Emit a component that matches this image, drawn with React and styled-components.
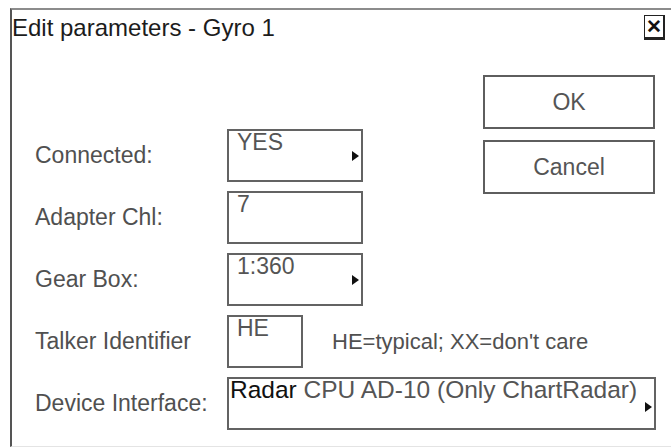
import React from 'react';
import styled, { createGlobalStyle } from 'styled-components';

const GlobalStyle = createGlobalStyle`
  body {
    margin: 0;
    background: #fff;
    font-family: "Liberation Sans", Arial, sans-serif;
    overflow: hidden;
  }
`;

const Dialog = styled.div`
  box-sizing: border-box;
  margin: 8px 0 0 10px;
  width: 661px;
  height: 439px;
  border-top: 2px solid #8c8c8c;
  border-left: 2px solid #555;
  border-bottom: 1px solid #e4e4e4;
  display: flex;
  flex-direction: column;
`;

const TitleBar = styled.div`
  height: 38px;
  display: flex;
  justify-content: space-between;
  align-items: flex-start;
`;

const Title = styled.div`
  padding-top: 4px;
  font-size: 24px;
  line-height: 28px;
  color: #1c1c1c;
`;

const CloseBox = styled.div`
  box-sizing: border-box;
  margin: 5px 6px 0 0;
  width: 21px;
  height: 25px;
  border: 1px solid #222;
  border-right-width: 2px;
  border-bottom-width: 3px;
  display: flex;
  align-items: center;
  justify-content: center;
  font-size: 19px;
  font-weight: bold;
  color: #111;
`;

const Body = styled.div`
  padding: 27px 16px 0 23px;
  display: flex;
  flex-direction: column;
  gap: 9px;
`;

const TopArea = styled.div`
  display: flex;
  align-items: flex-start;
`;

/* fixed width: the hint on the talker row runs on past it */
const Form = styled.div`
  margin-top: 54px;
  width: 328px;
  flex-shrink: 0;
  display: flex;
  flex-direction: column;
  gap: 9px;
`;

const Row = styled.div`
  display: flex;
  align-items: center;
  white-space: nowrap;
`;

const Label = styled.div`
  width: 192px;
  flex-shrink: 0;
  font-size: 23px;
  color: #505050;
`;

const Field = styled.div`
  box-sizing: border-box;
  flex-shrink: 0;
  width: ${p => p.$w}px;
  height: 53px;
  border: 2px solid #636363;
  padding: 0 2px 0 ${p => p.$pad ?? 8}px;
  display: flex;
  justify-content: space-between;
  font-size: ${p => p.$size ?? 23}px;
  line-height: 22px;
  color: #555;
`;

const Value = styled.span`
  align-self: flex-start;
`;

const Strong = styled.span`
  color: #111;
`;

const Arrow = styled.span`
  align-self: center;
  flex-shrink: 0;
  margin-top: ${p => p.$down ?? 0}px;
  width: 0;
  height: 0;
  border-left: 7px solid #111;
  border-top: 5px solid transparent;
  border-bottom: 5px solid transparent;
`;

const Hint = styled.div`
  flex-shrink: 0;
  margin-left: 29px;
  font-size: 22px;
  color: #505050;
`;

const Buttons = styled.div`
  margin-left: auto;
  display: flex;
  flex-direction: column;
  gap: 11px;
`;

const Button = styled.div`
  box-sizing: border-box;
  width: 172px;
  height: 54px;
  border: 2px solid #5e5e5e;
  display: flex;
  align-items: center;
  justify-content: center;
  font-size: 23px;
  color: #555;
`;

export default function App() {
  return (
    <>
      <GlobalStyle />
      <Dialog>
        <TitleBar>
          <Title>Edit parameters - Gyro 1</Title>
          <CloseBox>✕</CloseBox>
        </TitleBar>
        <Body>
          <TopArea>
            <Form>
              <Row>
                <Label>Connected:</Label>
                <Field $w={136}><Value>YES</Value><Arrow /></Field>
              </Row>
              <Row>
                <Label>Adapter Chl:</Label>
                <Field $w={136}><Value>7</Value></Field>
              </Row>
              <Row>
                <Label>Gear Box:</Label>
                <Field $w={136}><Value>1:360</Value><Arrow /></Field>
              </Row>
              <Row>
                <Label>Talker Identifier</Label>
                <Field $w={76}><Value>HE</Value></Field>
                <Hint>HE=typical; XX=don't care</Hint>
              </Row>
            </Form>
            <Buttons>
              <Button>OK</Button>
              <Button>Cancel</Button>
            </Buttons>
          </TopArea>
          <Row>
            <Label>Device Interface:</Label>
            <Field $w={429} $pad={1} $size={24.5}>
              <Value><Strong>Radar</Strong> CPU AD-10 (Only ChartRadar)</Value>
              <Arrow $down={6} />
            </Field>
          </Row>
        </Body>
      </Dialog>
    </>
  );
}
